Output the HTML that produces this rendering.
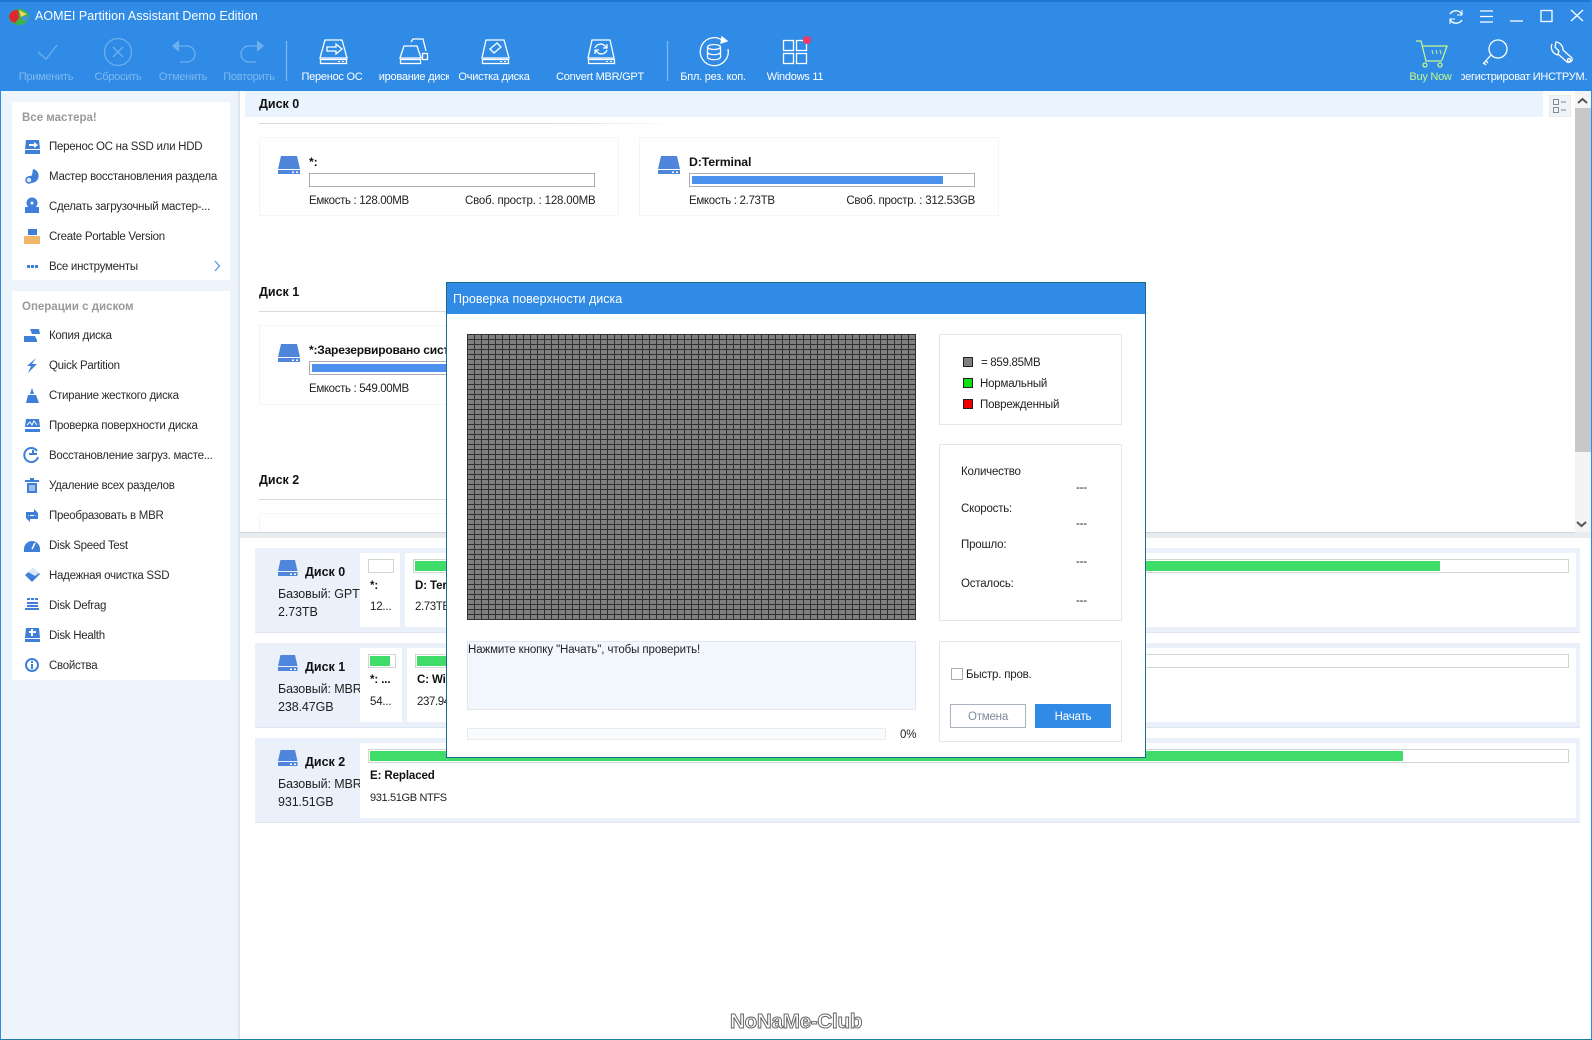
<!DOCTYPE html>
<html><head><meta charset="utf-8"><title>AOMEI Partition Assistant</title>
<style>
html,body{margin:0;padding:0;width:1592px;height:1040px;overflow:hidden;background:#fff}
body{position:relative;font-family:"Liberation Sans","DejaVu Sans",sans-serif;font-size:11.500px;letter-spacing:-.2px;color:#222}
.a{position:absolute;white-space:nowrap;line-height:14px}
.box{position:absolute;box-sizing:border-box}
.tb{position:absolute;top:70px;line-height:14px;text-align:center;color:#fff;white-space:nowrap;overflow:hidden;font-size:11px;letter-spacing:-.25px}
.dim{color:#7fb8ef}
.si{position:absolute;left:49px;margin-top:1px;line-height:14px;white-space:nowrap;color:#2a2a2a;font-size:11.500px;letter-spacing:-.27px}
.sh{position:absolute;left:22px;margin-top:1px;line-height:14px;font-weight:bold;color:#999;font-size:11.500px;letter-spacing:0}
.h{position:absolute;left:259px;font-weight:bold;font-size:12.500px;letter-spacing:0;line-height:14px;color:#111}
.card{position:absolute;box-sizing:border-box;background:#fff;border:1px solid #f3f5f7}
.bar{position:absolute;box-sizing:border-box;border:1px solid #a9adb1;background:#fff;height:14px}
.bar i{position:absolute;left:2px;top:2px;bottom:2px;background:#4b90ea;display:block}
.gb{position:absolute;box-sizing:border-box;border:1px solid #cfd6d0;background:#fff;height:14px}
.gb i{position:absolute;left:1px;top:1px;bottom:1px;background:#3fdc69;display:block}
.row{position:absolute;left:255px;width:1325px;background:#eaf1fb;box-sizing:border-box;border-bottom:1px solid #dfe6f2}
.cell{position:absolute;background:#fff}
.b{font-weight:bold;letter-spacing:-.1px;color:#111}
.m{font-size:12.500px;letter-spacing:-.1px}
.dl{position:absolute;box-sizing:border-box;background:#fff;border:1px solid #e4e7ea}
svg{position:absolute;overflow:visible}
</style></head><body>

<!-- Header -->
<div class="box" style="left:0;top:0;width:1592px;height:91px;background:#2f8be6;border-top:2px solid #1b78d3"></div>

<!-- Sidebar -->
<div class="box" style="left:0;top:91px;width:240px;height:949px;background:#edf4fc;border-right:2px solid #dde6ef;border-left:1px solid #2f8be6"></div>
<div class="box" style="left:12px;top:102px;width:218px;height:178px;background:#fff"></div>
<div class="box" style="left:12px;top:291px;width:218px;height:389px;background:#fff"></div>
<div class="sh" style="top:110px">Все мастера!</div>
<div class="si" style="top:139px">Перенос ОС на SSD или HDD</div>
<div class="si" style="top:169px">Мастер восстановления раздела</div>
<div class="si" style="top:199px">Сделать загрузочный мастер-...</div>
<div class="si" style="top:229px">Create Portable Version</div>
<div class="si" style="top:259px">Все инструменты</div>
<div class="sh" style="top:299px">Операции с диском</div>
<div class="si" style="top:328px">Копия диска</div>
<div class="si" style="top:358px">Quick Partition</div>
<div class="si" style="top:388px">Стирание жесткого диска</div>
<div class="si" style="top:418px">Проверка поверхности диска</div>
<div class="si" style="top:448px">Восстановление загруз. масте...</div>
<div class="si" style="top:478px">Удаление всех разделов</div>
<div class="si" style="top:508px">Преобразовать в MBR</div>
<div class="si" style="top:538px">Disk Speed Test</div>
<div class="si" style="top:568px">Надежная очистка SSD</div>
<div class="si" style="top:598px">Disk Defrag</div>
<div class="si" style="top:628px">Disk Health</div>
<div class="si" style="top:658px">Свойства</div>

<svg style="left:0;top:0" width="240" height="690" fill="#3f7fd8" stroke="none">
  <path d="M26 140h13l1 9H25z"/><rect x="25" y="150" width="15" height="4"/><path d="M29 144h5v-2l4 3-4 3v-2h-5z" fill="#fff"/>
  <path d="M33 169a7 7 0 1 1-7 11l1-1a3 3 0 0 1 4-3l1-1z"/><circle cx="29" cy="180" r="3" fill="#dbe8fa" stroke="#3f7fd8" stroke-width="1.500"/>
  <circle cx="32" cy="203" r="5.500"/><circle cx="32" cy="203" r="1.500" fill="#fff"/><path d="M25 207h14v6H25z"/>
  <rect x="28" y="229" width="9" height="6"/><rect x="24" y="236" width="16" height="8" fill="#efb66c"/>
  <rect x="27" y="265" width="3" height="3"/><rect x="31" y="265" width="3" height="3"/><rect x="35" y="265" width="3" height="3"/>
  <path d="M24 336h11l2 4H24zM30 329h9l1 5H32z"/><rect x="24" y="340" width="13" height="2"/>
  <path d="M36 358l-9 8h4l-3 7 9-9h-5z"/>
  <path d="M32 388l2 6h-4zM28 395h8l3 8H26z"/>
  <path d="M26 419h13l1 8H25z"/><path d="M27 425l3-3 2 3 2-4 3 4" stroke="#fff" fill="none"/><rect x="25" y="429" width="15" height="3"/>
  <path d="M37 451a7 7 0 1 0 1 6" fill="none" stroke="#3f7fd8" stroke-width="2"/><path d="M29 455h8v-2h-3v-3h-2v3h-3z"/>
  <rect x="25" y="480" width="14" height="2"/><rect x="30" y="478" width="4" height="2"/><path d="M27 483h10v10H27z"/><path d="M30 485v6M32 485v6M34 485v6" stroke="#fff" fill="none"/>
  <path d="M26 512h8v-3l4 4-4 4v-2h-6v3h-2zM38 519h-8v3l-4-4 4-4v2h6v-3h2z"/>
  <path d="M24 549a8 8 0 0 1 16 0v3H24z"/><path d="M32 549l3-6" stroke="#fff" fill="none" stroke-width="1.500"/>
  <path d="M33 568l7 6-8 8-7-7z"/><path d="M28 572l5-4 6 5-4 3z" fill="#dbe8fa"/>
  <rect x="27" y="598" width="3" height="2"/><rect x="31" y="598" width="3" height="2"/><rect x="35" y="598" width="3" height="2"/><rect x="27" y="602" width="11" height="2"/><rect x="27" y="605" width="11" height="2"/><rect x="25" y="608" width="14" height="2"/>
  <path d="M26 628h13l1 10H25z"/><path d="M32 629v7M29 632h7" stroke="#fff" stroke-width="2" fill="none"/><rect x="25" y="639" width="15" height="3"/>
  <circle cx="32" cy="665" r="6" fill="none" stroke="#3f7fd8" stroke-width="2"/><rect x="31" y="664" width="2" height="5"/><rect x="31" y="661" width="2" height="2"/>
  <path d="M215 261l4.500 5-4.500 5" fill="none" stroke="#4b90ea" stroke-width="1.200"/>
</svg>

<!-- Top area -->
<div class="box" style="left:245px;top:91px;width:1298px;height:26px;background:#eaf4fe"></div>
<div class="h" style="top:97px">Диск 0</div>
<div class="box" style="left:259px;top:123px;width:420px;height:1px;background:linear-gradient(90deg,#dcdcdc,#dcdcdc 70%,#fff)"></div>
<div class="card" style="left:259px;top:137px;width:360px;height:79px"></div>
<div class="card" style="left:639px;top:137px;width:360px;height:79px"></div>
<div class="a b" style="left:309px;top:155px;font-size:12.300px">*:</div>
<div class="bar" style="left:309px;top:173px;width:286px"></div>
<div class="a" style="left:309px;top:194px;letter-spacing:-.35px">Емкость : 128.00MB</div>
<div class="a" style="left:465px;top:194px;width:130px;text-align:right">Своб. простр. : 128.00MB</div>
<div class="a b" style="left:689px;top:155px;font-size:12.300px">D:Terminal</div>
<div class="bar" style="left:689px;top:173px;width:286px"><i style="width:251px"></i></div>
<div class="a" style="left:689px;top:194px;letter-spacing:-.32px">Емкость : 2.73TB</div>
<div class="a" style="left:815px;top:194px;width:160px;text-align:right;letter-spacing:-.25px">Своб. простр. : 312.53GB</div>

<div class="h" style="top:285px">Диск 1</div>
<div class="box" style="left:259px;top:311px;width:190px;height:1px;background:#dcdcdc"></div>
<div class="card" style="left:259px;top:325px;width:200px;height:80px"></div>
<div class="a b" style="left:309px;top:343px;font-size:12px;letter-spacing:-.2px;width:140px;overflow:hidden">*:Зарезервировано система</div>
<div class="bar" style="left:309px;top:361px;width:200px"><i style="width:190px"></i></div>
<div class="a" style="left:309px;top:382px;letter-spacing:-.35px">Емкость : 549.00MB</div>
<div class="h" style="top:473px">Диск 2</div>
<div class="box" style="left:259px;top:499px;width:190px;height:1px;background:#dcdcdc"></div>
<div class="card" style="left:259px;top:513px;width:200px;height:19px;border-bottom:0"></div>

<!-- Scrollbar -->
<div class="box" style="left:1575px;top:91px;width:16px;height:441px;background:#f4f4f4"></div>
<div class="box" style="left:1575px;top:108px;width:16px;height:344px;background:#c8c8c8"></div>
<div class="box" style="left:1549px;top:95px;width:22px;height:22px;background:#eef3f7;border:1px solid #e6ebef"></div>
<svg style="left:0;top:0" width="1592" height="540" fill="none">
  <path d="M1578 103l4.500-4 4.500 4" stroke="#555" stroke-width="2"/>
  <path d="M1577 522l4.500 4 4.500-4" stroke="#555" stroke-width="2"/>
  <rect x="1553.500" y="99.500" width="5" height="5" stroke="#7a8a96"/><rect x="1553.500" y="107.500" width="5" height="5" stroke="#7a8a96"/>
  <path d="M1561 102h5M1561 110h5" stroke="#7a8a96"/>
</svg>

<!-- Splitter -->
<div class="box" style="left:240px;top:532px;width:1335px;height:6px;background:#e9ecee;border-top:1px solid #d3d6d8"></div>
<div class="box" style="left:1575px;top:532px;width:16px;height:6px;background:#e9ecee"></div>

<!-- Lower rows -->
<div class="row" style="top:548px;height:85px"></div>
<div class="row" style="top:643px;height:85px"></div>
<div class="row" style="top:738px;height:85px"></div>
<div class="cell" style="left:360px;top:553px;width:40px;height:74px"></div>
<div class="cell" style="left:405px;top:553px;width:1171px;height:74px"></div>
<div class="cell" style="left:360px;top:648px;width:42px;height:74px"></div>
<div class="cell" style="left:407px;top:648px;width:1169px;height:74px"></div>
<div class="cell" style="left:360px;top:743px;width:1216px;height:75px"></div>

<div class="gb" style="left:368px;top:559px;width:26px"></div>
<div class="gb" style="left:413px;top:559px;width:1156px"><i style="width:1025px"></i></div>
<div class="gb" style="left:368px;top:654px;width:28px"><i style="width:20px"></i></div>
<div class="gb" style="left:415px;top:654px;width:1154px"><i style="width:300px"></i></div>
<div class="gb" style="left:368px;top:749px;width:1201px"><i style="width:1033px"></i></div>

<div class="a b" style="left:305px;top:565px;font-size:12.500px;letter-spacing:0">Диск 0</div>
<div class="a m" style="left:278px;top:587px;width:82px;overflow:hidden">Базовый: GPT</div>
<div class="a m" style="left:278px;top:605px">2.73TB</div>
<div class="a b" style="left:370px;top:579px">*:</div><div class="a" style="left:370px;top:600px">12...</div>
<div class="a b" style="left:415px;top:579px">D: Terminal</div><div class="a" style="left:415px;top:600px;letter-spacing:-.4px">2.73TB NTFS</div>

<div class="a b" style="left:305px;top:660px;font-size:12.500px;letter-spacing:0">Диск 1</div>
<div class="a m" style="left:278px;top:682px;width:82px;overflow:hidden">Базовый: MBR</div>
<div class="a m" style="left:278px;top:700px">238.47GB</div>
<div class="a b" style="left:370px;top:673px">*: ...</div><div class="a" style="left:370px;top:695px">54...</div>
<div class="a b" style="left:417px;top:673px">C: Windows</div><div class="a" style="left:417px;top:695px;letter-spacing:-.4px">237.94GB NTFS</div>

<div class="a b" style="left:305px;top:755px;font-size:12.500px;letter-spacing:0">Диск 2</div>
<div class="a m" style="left:278px;top:777px;width:82px;overflow:hidden">Базовый: MBR</div>
<div class="a m" style="left:278px;top:795px">931.51GB</div>
<div class="a b" style="left:370px;top:769px">E: Replaced</div>
<div class="a" style="left:370px;top:791px;font-size:11px;letter-spacing:-.35px">931.51GB NTFS</div>

<!-- Disk icons -->
<svg style="left:0;top:0" width="400" height="800" fill="#4f86dc">
  <defs><g id="d"><path d="M3 0H19L22 13H0z"/><rect y="14" width="22" height="4"/><rect x="14" y="15.500" width="2" height="1.500" fill="#fff"/><rect x="18" y="15.500" width="2" height="1.500" fill="#fff"/></g>
  <g id="e"><path d="M2.500 0H17L19.500 11H0z"/><rect y="12" width="19.500" height="4"/><rect x="12" y="13.500" width="2" height="1.500" fill="#fff"/><rect x="16" y="13.500" width="2" height="1.500" fill="#fff"/></g></defs>
  <use href="#d" x="278" y="156"/><use href="#d" x="278" y="344"/>
  <use href="#e" x="278" y="560"/><use href="#e" x="278" y="655"/><use href="#e" x="278" y="750"/>
</svg>
<svg style="left:640px;top:0" width="40" height="190" fill="#4f86dc"><use href="#d" x="18" y="156"/></svg>

<!-- Toolbar text -->
<div class="a" style="left:35px;top:9px;color:#fff;font-size:12.500px;letter-spacing:.03px">AOMEI Partition Assistant Demo Edition</div>
<div class="tb dim" style="left:10px;width:72px">Применить</div>
<div class="tb dim" style="left:82px;width:72px">Сбросить</div>
<div class="tb dim" style="left:148px;width:70px">Отменить</div>
<div class="tb dim" style="left:214px;width:70px">Повторить</div>
<div class="tb" style="left:294px;width:76px">Перенос ОС</div>
<div class="tb" style="left:379px;width:70px;text-align:left"><span style="margin-left:-18px">Копирование диска</span></div>
<div class="tb" style="left:454px;width:80px">Очистка диска</div>
<div class="tb" style="left:550px;width:100px">Convert MBR/GPT</div>
<div class="tb" style="left:672px;width:82px">Бпл. рез. коп.</div>
<div class="tb" style="left:755px;width:80px">Windows 11</div>
<div class="tb" style="left:1400px;width:61px;color:#c4f58c">Buy Now</div>
<div class="tb" style="left:1461px;width:70px;text-align:left"><span style="margin-left:-14px">Зарегистрировать</span></div>
<div class="tb" style="left:1532px;width:56px">ИНСТРУМ.</div>

<!-- Toolbar icons -->
<svg style="left:0;top:-1px" width="1592" height="92" fill="none" stroke="#fff" stroke-width="1.300">
  <g stroke="#6cb0ee">
    <path d="M38 53l8 7 11-14"/>
    <circle cx="118" cy="53" r="13.500"/><path d="M113 48l10 10M123 48l-10 10"/>
    <path d="M173 47h14a8 8 0 0 1 0 16h-7"/><path d="M179 42l-6 5 6 5" fill="#6cb0ee"/>
    <path d="M263 47h-14a8 8 0 0 0 0 16h7"/><path d="M257 42l6 5-6 5" fill="#6cb0ee"/>
  </g>
  <path d="M286.500 42v40M667.500 42v40" stroke="#7db7ef"/>
  <!-- migrate -->
  <path d="M325 41h17l5 18h-27z"/><rect x="320.500" y="60.500" width="26" height="4"/>
  <path d="M327 48h9v-3l6 5-6 5v-3h-9z"/><path d="M338 62.500h2M342 62.500h2" stroke-width="1"/>
  <!-- clone -->
  <path d="M404 47h13l4 12h-21z"/><rect x="400.500" y="60.500" width="20" height="4"/>
  <path d="M411 43l2-3h10l3 12"/><rect x="422.500" y="54.500" width="5" height="6"/>
  <!-- wipe -->
  <path d="M486 41h18l5 18h-27z"/><rect x="482.500" y="60.500" width="26" height="4"/>
  <path d="M490 50l7-6 4 4-7 6z"/><path d="M500 62.500h2M504 62.500h2" stroke-width="1"/>
  <!-- convert -->
  <path d="M592 41h18l4 18h-26z"/><rect x="588.500" y="60.500" width="26" height="4"/>
  <path d="M595 49a6 6 0 0 1 10-2l2 2M607 51a6 6 0 0 1-10 2l-2-2"/><path d="M607 45v4h-4M595 55v-4h4"/><path d="M606 62.500h2M610 62.500h2" stroke-width="1"/>
  <!-- backup -->
  <path d="M722 41a14 14 0 1 0 6 9"/><path d="M722 38l5 4-6 2z" fill="#fff"/>
  <ellipse cx="714" cy="48" rx="6.500" ry="2.500"/><path d="M707.500 48v10c0 3.500 13 3.500 13 0V48M707.500 53c0 3.500 13 3.500 13 0"/>
  <!-- win11 -->
  <rect x="783.500" y="41.500" width="10" height="10"/><rect x="796.500" y="41.500" width="10" height="10"/><rect x="783.500" y="54.500" width="10" height="10"/><rect x="796.500" y="54.500" width="10" height="10"/>
  <circle cx="807" cy="41" r="4" fill="#f0386b" stroke="none"/>
  <!-- cart -->
  <g stroke="#c4f58c">
    <path d="M1416 42h5l5 20h16M1423 47h24l-5 14"/><path d="M1432 51l1 4M1436 51l1 4M1440 51l1 4" stroke-width="1"/><circle cx="1425" cy="66" r="2"/><circle cx="1440" cy="66" r="2"/>
  </g>
  <!-- key -->
  <circle cx="1498" cy="50" r="9"/><path d="M1491 56l-8 9M1486 62l2 2M1484 64l2 2"/>
  <!-- wrench -->
  <path d="M1556 43l-1 5 4 4-1 3 9 8a3.500 3.500 0 0 0 5-4l-9-8a8 8 0 0 0-7-8zM1552 45a8 8 0 0 0 6 11"/><circle cx="1569" cy="61" r="1.500"/>
  <!-- window controls -->
  <g transform="translate(0 1)">
  <path d="M1450 14a7 7 0 0 1 11-1l1 2M1462 20a7 7 0 0 1-11 1l-1-2"/><path d="M1462 10v5h-5M1450 24v-5h5" stroke-width="1"/>
  <path d="M1480 11h13M1480 16.500h13M1480 22h13"/>
  <path d="M1510 21h13"/>
  <rect x="1541" y="10.500" width="11" height="11"/>
  <path d="M1571 10l12 11M1583 10l-12 11"/>
  </g>
</svg>
<!-- Logo -->
<svg style="left:8px;top:8px" width="22" height="18">
  <ellipse cx="11" cy="9" rx="10" ry="8" fill="#39b54a"/><path d="M1 9a8 7 0 0 1 9-7l1 8-4 5a8 8 0 0 1-6-6z" fill="#e0272b"/><path d="M11 2l8 4-6 3z" fill="#f4d35e"/><path d="M13 9l7-1a10 8 0 0 1-3 6z" fill="#4a90e2"/>
</svg>

<!-- Dialog -->
<div class="box" style="left:446px;top:282px;width:700px;height:476px;background:#fff;border:1px solid #1b6b8e"></div>
<div class="box" style="left:447px;top:283px;width:698px;height:31px;background:#2f8be6"></div>
<div class="a" style="left:453px;top:292px;color:#fff;font-size:12.500px;letter-spacing:0">Проверка поверхности диска</div>
<div class="box" style="left:467px;top:334px;width:449px;height:286px;background-color:#808080;background-image:linear-gradient(#303030 1px,transparent 1px),linear-gradient(90deg,#303030 1px,transparent 1px);background-size:7px 5px;border-right:1px solid #303030;border-bottom:1px solid #303030"></div>

<div class="dl" style="left:939px;top:334px;width:183px;height:91px"></div>
<div class="box" style="left:963px;top:357px;width:10px;height:10px;background:#808080;border:1px solid #222"></div>
<div class="box" style="left:963px;top:378px;width:10px;height:10px;background:#0fe00f;border:1px solid #222"></div>
<div class="box" style="left:963px;top:399px;width:10px;height:10px;background:#f00000;border:1px solid #222"></div>
<div class="a" style="left:981px;top:356px;letter-spacing:-.3px">= 859.85MB</div>
<div class="a" style="left:980px;top:377px">Нормальный</div>
<div class="a" style="left:980px;top:398px">Поврежденный</div>

<div class="dl" style="left:939px;top:444px;width:183px;height:177px"></div>
<div class="a" style="left:961px;top:465px">Количество</div><div class="a" style="left:1076px;top:481px">---</div>
<div class="a" style="left:961px;top:502px">Скорость:</div><div class="a" style="left:1076px;top:517px">---</div>
<div class="a" style="left:961px;top:538px">Прошло:</div><div class="a" style="left:1076px;top:555px">---</div>
<div class="a" style="left:961px;top:577px">Осталось:</div><div class="a" style="left:1076px;top:594px">---</div>

<div class="box" style="left:467px;top:641px;width:449px;height:69px;background:#f2f6fd;border:1px solid #e2e7ee"></div>
<div class="a" style="left:468px;top:643px;letter-spacing:-.1px;font-size:11.500px">Нажмите кнопку "Начать", чтобы проверить!</div>
<div class="box" style="left:467px;top:728px;width:419px;height:12px;background:#fafbfc;border:1px solid #e8ebee"></div>
<div class="a" style="left:900px;top:728px">0%</div>

<div class="dl" style="left:939px;top:641px;width:183px;height:101px"></div>
<div class="box" style="left:951px;top:668px;width:12px;height:12px;background:#fff;border:1px solid #a8adb3"></div>
<div class="a" style="left:966px;top:668px">Быстр. пров.</div>
<div class="box" style="left:950px;top:704px;width:76px;height:24px;background:#fff;border:1px solid #a9b3bd;text-align:center;line-height:24px;color:#7d8a99">Отмена</div>
<div class="box" style="left:1035px;top:704px;width:76px;height:24px;background:#2f8be6;text-align:center;line-height:26px;color:#fff">Начать</div>

<!-- Watermark -->
<div class="a" style="left:730px;top:1010px;width:132px;text-align:center;font-size:20.500px;letter-spacing:-.2px;line-height:24px;font-weight:bold;color:#fff;-webkit-text-stroke:1px #666">NoNaMe-Club</div>

<!-- Window edges -->
<div class="box" style="left:1591px;top:0;width:1px;height:1040px;background:#2f8be6"></div>
<div class="box" style="left:0;top:1039px;width:1592px;height:1px;background:#1f7ea3"></div>
</body></html>
